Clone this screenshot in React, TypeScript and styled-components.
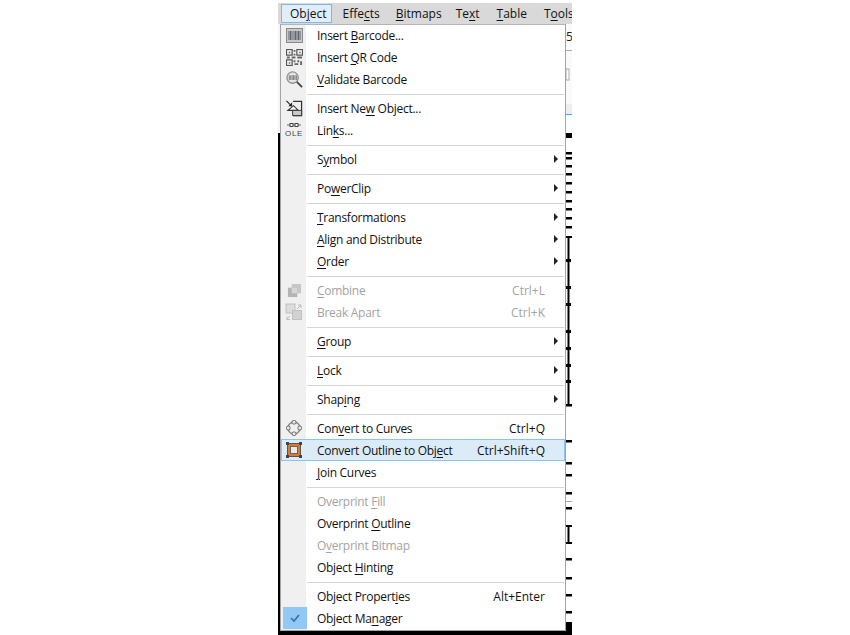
import React from "react";
import styled, { createGlobalStyle } from "styled-components";

const GlobalStyle = createGlobalStyle`
  html, body {
    margin: 0;
    padding: 0;
    background: #fff;
  }
  body {
    font-family: "Open Sans", "Noto Sans", sans-serif;
    font-size: 12px;
    color: #111;
  }
`;

const Page = styled.div`
  width: 850px;
  height: 635px;
  overflow: hidden;
  padding: 3px 278px 0;
  box-sizing: border-box;
`;

const Window = styled.div`
  width: 294px;
  height: 632px;
  display: flex;
  flex-direction: column;
  background: #000;
`;

const MenuBar = styled.div`
  height: 21px;
  display: flex;
  align-items: center;
  background: #d9d9d9;
  padding-left: 3px;
  flex: none;
  overflow: hidden;
`;

const BarItem = styled.div<{ $left: number; $active?: boolean }>`
  height: 19px;
  line-height: 17px;
  box-sizing: border-box;
  white-space: nowrap;
  flex: none;
  margin-left: ${({ $left }) => $left}px;
  padding: ${({ $active }) => ($active ? "0 5px 0 8px" : "0 7px")};
  border: 1px solid ${({ $active }) => ($active ? "#7db9e6" : "transparent")};
  background: ${({ $active }) => ($active ? "#e1eefa" : "transparent")};
`;

const Body = styled.div`
  display: flex;
  height: 607px;
  flex: none;
`;

const LeftEdge = styled.div`
  width: 2px;
  display: flex;
  flex-direction: column;
  flex: none;
`;

const LeftEdgeTop = styled.div`
  height: 109px;
  background: #f5f5f5;
`;

const Menu = styled.div`
  width: 286px;
  height: 607px;
  box-sizing: border-box;
  flex: none;
  border: 1px solid #a3a3a3;
  border-top: none;
  box-shadow: inset 0 1px 0 #b5b5b5;
  background: linear-gradient(to right, #f0f0f0 25px, #fff 25px);
  display: flex;
  flex-direction: column;
`;

const Row = styled.div<{ $hot?: boolean; $off?: boolean }>`
  height: 22px;
  flex: none;
  display: flex;
  align-items: center;
  box-sizing: border-box;
  color: ${({ $off }) => ($off ? "#a3a3a3" : "#111")};
  background: ${({ $hot }) => ($hot ? "#dcebf8" : "transparent")};
  outline: ${({ $hot }) => ($hot ? "1px solid #8fc3ea" : "none")};
  outline-offset: -1px;
`;

const IconCell = styled.div<{ $checked?: boolean }>`
  width: 24px;
  height: 22px;
  margin-left: ${({ $checked }) => ($checked ? "2px" : "1px")};
  margin-right: ${({ $checked }) => ($checked ? "-1px" : "0")};
  flex: none;
  display: flex;
  align-items: center;
  justify-content: center;
  background: ${({ $checked }) => ($checked ? "#90c8f6" : "transparent")};
`;

const Label = styled.span`
  margin-left: 11px;
  white-space: nowrap;
  letter-spacing: -0.28px;
`;

const Shortcut = styled.span`
  margin-left: auto;
  margin-right: 20px;
  white-space: nowrap;
`;

const Arrow = styled.span`
  margin-left: auto;
  margin-right: 7px;
  width: 0;
  height: 0;
  border-left: 4px solid #222;
  border-top: 4px solid transparent;
  border-bottom: 4px solid transparent;
`;

const Separator = styled.div`
  height: 1px;
  flex: none;
  margin: 4px 1px 2px 26px;
  background: #d4d4d4;
`;

const Ruler = styled.svg`
  width: 6px;
  height: 607px;
  flex: none;
  display: block;
  background: #fff;
`;

const Key = styled.u`
  text-underline-offset: 2px;
  text-decoration-thickness: 1px;
`;

function Caption({ text }: { text: string }) {
  const at = text.indexOf("&");
  if (at < 0) return <>{text}</>;
  return (
    <>
      {text.slice(0, at)}
      <Key>{text[at + 1]}</Key>
      {text.slice(at + 2)}
    </>
  );
}

const BarcodeIcon = () => (
  <svg width="17" height="15" viewBox="0 0 17 15">
    <rect x="0.5" y="0.5" width="16" height="14" fill="#c8c8c8" stroke="#8a8a8a" />
    <path d="M3 3v9M4.500 3v9M6 3v9M8 3v9M9.500 3v9M11 3v9M12.500 3v9M14 3v9" stroke="#5f6470" strokeWidth="1" />
  </svg>
);

const QrIcon = () => (
  <svg width="17" height="17" viewBox="0 0 18 18" fill="none" stroke="#555">
    <rect x="0.500" y="0.500" width="6" height="6" strokeWidth="1.300" />
    <rect x="11.500" y="0.500" width="6" height="6" strokeWidth="1.300" />
    <rect x="0.500" y="11.500" width="6" height="6" strokeWidth="1.300" />
    <path
      d="M3 3h1.500v1.500H3zM14 3h1.500v1.500H14zM3 14h1.500v1.500H3zM8 1h2v2H8zM8 5h2v2H8zM1 8h3v2H1zM6 8h4v2H6zM12 8h5v2h-5zM8 12h2v2H8zM12 12h2v2h-2zM15 13h2v4h-2zM9 15h4v2H9z"
      fill="#666"
      stroke="none"
    />
  </svg>
);

const ValidateIcon = () => (
  <svg width="17" height="17" viewBox="0 0 18 18" fill="none">
    <circle cx="7" cy="7" r="6" fill="#e4e4e4" stroke="#8f8f8f" strokeWidth="1.400" />
    <path d="M3.500 4.500v5M5 4.500v5M6.500 4.500v5M8 4.500v5M9.500 4.500v5M11 4.500v5" stroke="#777" />
    <path d="M11.500 11.500L17 17" stroke="#444" strokeWidth="2" />
  </svg>
);

const NewObjectIcon = () => (
  <svg width="17" height="17" viewBox="0 0 18 18" fill="none">
    <path d="M0.500 1L6 6.500" stroke="#222" strokeWidth="1.200" />
    <path d="M2.500 6.500H6.500V2.500z" fill="#222" />
    <path d="M7.500 1.500h9v15h-9" stroke="#333" strokeWidth="1.300" />
    <path d="M2 11l6-5 5 5H2z" fill="#fff" stroke="#333" strokeWidth="1.200" />
    <path d="M7 11h9.500v5.500H7z" fill="#c9c9c9" stroke="#333" strokeWidth="1" />
  </svg>
);

const OleIcon = () => (
  <svg width="18" height="16" viewBox="0 0 18 16">
    <path d="M2 3h14" stroke="#666" />
    <rect x="5" y="1.500" width="3" height="3" fill="#fff" stroke="#444" />
    <rect x="10" y="1.500" width="3" height="3" fill="#fff" stroke="#444" />
    <text x="9" y="14" textAnchor="middle" fontFamily="Liberation Sans, sans-serif" fontSize="8" letterSpacing="0.600" fill="#444">
      OLE
    </text>
  </svg>
);

const CombineIcon = () => (
  <svg width="15" height="15" viewBox="0 0 16 16">
    <rect x="5" y="1" width="10" height="10" fill="#c6c6c6" />
    <rect x="1" y="5" width="10" height="10" fill="#b4b4b4" />
    <rect x="5" y="5" width="6" height="6" fill="#d6d6d6" />
  </svg>
);

const BreakApartIcon = () => (
  <svg width="18" height="18" viewBox="0 0 18 18">
    <rect x="1" y="1" width="9" height="9" fill="#dcdcdc" stroke="#c0c0c0" />
    <rect x="7.500" y="7.500" width="9" height="9" fill="#d2d2d2" stroke="#c0c0c0" />
    <path d="M12 6l4-4M13 2h3v3M1.500 16.500l3.500-3.500M2 13.500v3h3" stroke="#bcbcbc" fill="none" />
  </svg>
);

const CurvesIcon = () => (
  <svg width="16" height="16" viewBox="0 0 16 16" fill="none">
    <circle cx="8" cy="8" r="6" stroke="#888" strokeWidth="1.400" />
    <g fill="#e8e8e8" stroke="#666">
      <rect x="6" y="0.500" width="4" height="3.500" rx="1.500" />
      <rect x="6" y="12" width="4" height="3.500" rx="1.500" />
      <rect x="0.500" y="6" width="3.500" height="4" rx="1.500" />
      <rect x="12" y="6" width="3.500" height="4" rx="1.500" />
    </g>
  </svg>
);

const OutlineIcon = () => (
  <svg width="16" height="16" viewBox="0 0 16 16">
    <rect x="1.500" y="1.500" width="13" height="13" fill="#d97a26" stroke="#555" />
    <rect x="4.500" y="4.500" width="7" height="7" fill="#e6e8ea" stroke="#666" />
    <g fill="#444">
      <rect x="0" y="0" width="3" height="3" />
      <rect x="13" y="0" width="3" height="3" />
      <rect x="0" y="13" width="3" height="3" />
      <rect x="13" y="13" width="3" height="3" />
    </g>
  </svg>
);

const CheckIcon = () => (
  <svg width="12" height="10" viewBox="0 0 12 10" fill="none">
    <path d="M2 5l3 3 5-6" stroke="#3f6f9c" strokeWidth="1.600" />
  </svg>
);

type Item = {
  text: string;
  icon?: React.ReactNode;
  keys?: string;
  sub?: boolean;
  off?: boolean;
  hot?: boolean;
  checked?: boolean;
};

const groups: Item[][] = [
  [
    { text: "Insert &Barcode...", icon: <BarcodeIcon /> },
    { text: "Insert &QR Code", icon: <QrIcon /> },
    { text: "&Validate Barcode", icon: <ValidateIcon /> },
  ],
  [
    { text: "Insert Ne&w Object...", icon: <NewObjectIcon /> },
    { text: "Lin&ks...", icon: <OleIcon /> },
  ],
  [{ text: "S&ymbol", sub: true }],
  [{ text: "Po&werClip", sub: true }],
  [
    { text: "&Transformations", sub: true },
    { text: "&Align and Distribute", sub: true },
    { text: "&Order", sub: true },
  ],
  [
    { text: "&Combine", keys: "Ctrl+L", off: true, icon: <CombineIcon /> },
    { text: "Break Apart", keys: "Ctrl+K", off: true, icon: <BreakApartIcon /> },
  ],
  [{ text: "&Group", sub: true }],
  [{ text: "&Lock", sub: true }],
  [{ text: "Shap&ing", sub: true }],
  [
    { text: "Con&vert to Curves", keys: "Ctrl+Q", icon: <CurvesIcon /> },
    { text: "Convert Outline to Obj&ect", keys: "Ctrl+Shift+Q", hot: true, icon: <OutlineIcon /> },
    { text: "&Join Curves" },
  ],
  [
    { text: "Overprint &Fill", off: true },
    { text: "Overprint &Outline" },
    { text: "O&verprint Bitmap", off: true },
    { text: "Object &Hinting" },
  ],
  [
    { text: "Object Propert&ies", keys: "Alt+Enter" },
    { text: "Object Ma&nager", checked: true, icon: <CheckIcon /> },
  ],
];

const bar = [
  { text: "Ob&ject", left: 0, active: true },
  { text: "Effe&cts", left: 2 },
  { text: "&Bitmaps", left: 0 },
  { text: "Te&xt", left: -2 },
  { text: "&Table", left: 1 },
  { text: "T&ools", left: 1 },
];

// ruler marks seen to the right of the menu, y relative to the top of the strip (page y - 24)
const ticks = [128, 133, 141, 149, 158, 167, 176, 184, 193, 202, 416, 438, 450, 468, 483, 534, 553, 570, 587];
const nodes = [235, 262, 279, 306, 323, 340, 356];

export default function App() {
  return (
    <>
      <GlobalStyle />
      <Page>
        <Window>
          <MenuBar>
            {bar.map((b) => (
              <BarItem key={b.text} $left={b.left} $active={b.active}>
                <Caption text={b.text} />
              </BarItem>
            ))}
          </MenuBar>
          <Body>
            <LeftEdge>
              <LeftEdgeTop />
            </LeftEdge>
            <Menu>
              {groups.map((group, g) => (
                <React.Fragment key={g}>
                  {g > 0 && <Separator />}
                  {group.map((item) => (
                    <Row key={item.text} $hot={item.hot} $off={item.off}>
                      <IconCell $checked={item.checked}>{item.icon}</IconCell>
                      <Label>
                        <Caption text={item.text} />
                      </Label>
                      {item.keys && <Shortcut>{item.keys}</Shortcut>}
                      {item.sub && <Arrow />}
                    </Row>
                  ))}
                </React.Fragment>
              ))}
            </Menu>
            <Ruler viewBox="0 0 6 607">
              <rect x="0" y="0" width="6" height="90" fill="#fafafa" />
              <text x="0" y="17" fontFamily="Open Sans, sans-serif" fontSize="12" fill="#222">
                5'
              </text>
              <rect x="0" y="26" width="6" height="1" fill="#aaa" />
              <rect x="0" y="45" width="3" height="11" fill="#fff" stroke="#aaa" />
              <rect x="0" y="80" width="6" height="10" fill="#eee" />
              <rect x="0" y="90" width="6" height="1" fill="#38b0ee" />
              <rect x="0" y="109" width="6" height="5" fill="#000" />
              {ticks.map((y) => (
                <rect key={y} x="0" y={y} width="6" height="2.500" fill="#000" />
              ))}
              <rect x="1.500" y="212" width="2" height="169" fill="#000" />
              <rect x="0" y="212" width="6" height="2" fill="#000" />
              <rect x="0" y="380" width="6" height="2.500" fill="#000" />
              {nodes.map((y) => (
                <rect key={y} x="0" y={y} width="5" height="3" fill="#000" />
              ))}
              <rect x="1.500" y="501" width="2" height="18" fill="#000" />
              <rect x="0" y="501" width="6" height="2" fill="#000" />
              <rect x="0" y="518" width="6" height="2" fill="#000" />
              <rect x="0" y="477" width="6" height="1" fill="#aaa" />
              <rect x="0" y="598" width="6" height="9" fill="#000" />
            </Ruler>
          </Body>
        </Window>
      </Page>
    </>
  );
}
